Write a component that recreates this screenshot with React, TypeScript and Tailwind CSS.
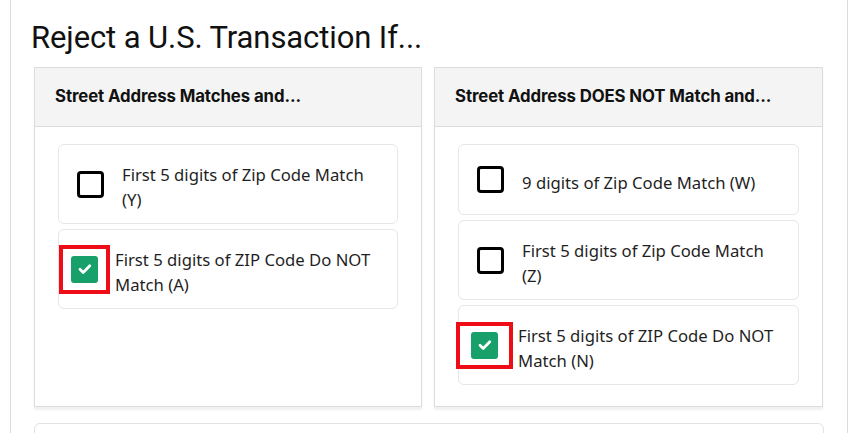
import React from "react";

type Opt = { label: React.ReactNode; checked?: boolean; shift?: number };

const left: Opt[] = [
  { label: <>First 5 digits of Zip Code Match<br />(Y)</> },
  { label: <>First 5 digits of ZIP Code Do NOT<br />Match (A)</>, checked: true },
];

const right: Opt[] = [
  { label: <>9 digits of Zip Code Match (W)</> },
  { label: <>First 5 digits of Zip Code Match<br />(Z)</> },
  { label: <>First 5 digits of ZIP Code Do NOT<br />Match (N)</>, checked: true, shift: 1 },
];

export default function App() {
  return (
    <div className="h-[433px] w-[854px] overflow-hidden bg-white text-[#1a1a1a]">
      <div className="ml-[10px] h-full w-[838px] border-x border-[#dcdcdc] px-[23px]">
        <h1 className="-ml-[3px] pt-[20px] font-['Roboto',sans-serif] text-[31px] leading-[36px] tracking-[-0.1px] text-[#111]">
          Reject a U.S. Transaction If...
        </h1>

        <div className="mt-[11px] grid grid-cols-[388px_389px] gap-[12px]">
          <Card title="Street Address Matches and..." options={left} />
          <Card title="Street Address DOES NOT Match and..." options={right} />
        </div>

        <div className="mt-[16px] h-[40px] rounded-t-[6px] border border-[#e2e2e2]" />
      </div>
    </div>
  );
}

function Card({ title, options }: { title: string; options: Opt[] }) {
  return (
    <div className="border border-[#dcdcdc] shadow-[0_3px_2px_rgba(0,0,0,0.06)]">
      <div className="flex h-[59px] items-center border-b border-[#dcdcdc] bg-[#f4f4f4] pl-[20px] font-['Inter',sans-serif] text-[16.8px] font-bold tracking-[-0.1px] text-[#111]">
        {title}
      </div>
      <div className="flex flex-col gap-[5px] px-[23px] pt-[17px] pb-[21px]">
        {options.map((o, i) => (
          <Item key={i} {...o} />
        ))}
      </div>
    </div>
  );
}

function Item({ label, checked, shift }: Opt) {
  return (
    <div className="flex min-h-[71px] items-center rounded-[6px] border border-[#e6e6e6] py-[11px] font-['Noto_Sans',sans-serif] text-[16.7px] leading-[25px] text-[#1f1f1f]">
      {checked ? (
        <div
          className="flex h-[49px] w-[51px] shrink-0 items-center justify-center border-[4px] border-[#ee0d16]"
          style={shift ? { marginLeft: -3, width: 57, height: 47 } : undefined}
        >
          <div className="flex h-[27px] w-[27px] items-center justify-center rounded-[3px] bg-[#17a06a]">
            <svg width="16" height="16" viewBox="0 0 16 16" fill="none">
              <path d="M3 8.3l3.2 3.1 6.6-6.6" stroke="white" strokeWidth="2.8" strokeLinecap="round" strokeLinejoin="round" />
            </svg>
          </div>
        </div>
      ) : (
        <div className="ml-[18px] h-[27px] w-[27px] shrink-0 rounded-[4px] border-[3px] border-black" />
      )}
      <div className={checked ? "ml-[5px] pt-[6px]" : "ml-[18px] pt-[6px]"}>{label}</div>
    </div>
  );
}
